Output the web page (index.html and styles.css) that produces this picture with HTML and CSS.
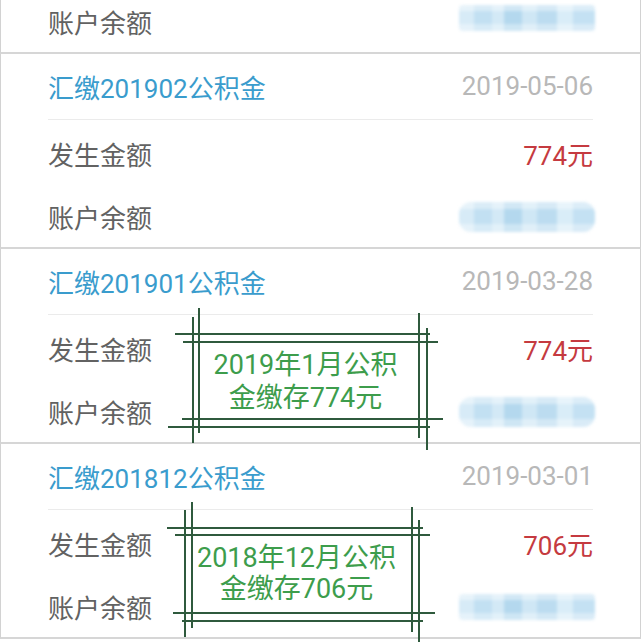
FILE: index.html
```html
<!DOCTYPE html>
<html lang="zh-CN">
<head>
<meta charset="utf-8">
<title>公积金明细</title>
<link rel="stylesheet" href="styles.css">
</head>
<body>
<div class="screen">
  <div class="list">
    <section class="card">
      <div class="row"><span class="label">账户余额</span><span class="masked m1"></span></div>
    </section>
    <section class="card">
      <div class="head"><span class="title">汇缴201902公积金</span><span class="date">2019-05-06</span></div>
      <div class="row"><span class="label">发生金额</span><span class="amount">774元</span></div>
      <div class="row"><span class="label">账户余额</span><span class="masked m2"></span></div>
    </section>
    <section class="card">
      <div class="head"><span class="title">汇缴201901公积金</span><span class="date">2019-03-28</span></div>
      <div class="row"><span class="label">发生金额</span><span class="amount">774元</span></div>
      <div class="row"><span class="label">账户余额</span><span class="masked m3"></span></div>
    </section>
    <section class="card">
      <div class="head"><span class="title">汇缴201812公积金</span><span class="date">2019-03-01</span></div>
      <div class="row"><span class="label">发生金额</span><span class="amount">706元</span></div>
      <div class="row"><span class="label">账户余额</span><span class="masked m4"></span></div>
    </section>
  </div>

  <div class="stamp s1">
    <i class="ln h a"></i><i class="ln h b"></i><i class="ln h c"></i><i class="ln h d"></i>
    <i class="ln v a"></i><i class="ln v b"></i><i class="ln v c"></i><i class="ln v d"></i>
    <div class="txt">2019年1月公积<br>金缴存774元</div>
  </div>
  <div class="stamp s2">
    <i class="ln h a"></i><i class="ln h b"></i><i class="ln h c"></i><i class="ln h d"></i>
    <i class="ln v a"></i><i class="ln v b"></i><i class="ln v c"></i><i class="ln v d"></i>
    <div class="txt">2018年12月公积<br>金缴存706元</div>
  </div>
</div>
</body>
</html>
```

FILE: styles.css
```css
* { box-sizing: border-box; }
html, body { margin: 0; padding: 0; background: #fff; }
body {
  font-family: Roboto, "Noto Sans CJK SC", sans-serif;
  width: 641px;
  height: 642px;
  overflow: hidden;
}
.screen {
  position: relative;
  width: 641px;
  height: 642px;
  overflow: hidden;
  background: #fff;
}
.list {
  margin-top: -12px;
  display: flex;
  flex-direction: column;
}
.card {
  border-left: 1px solid #d2d2d2;
  border-right: 1px solid #d2d2d2;
  border-bottom: 2px solid #d6d6d6;
  padding: 0 47px;
  display: flex;
  flex-direction: column;
}
.head {
  height: 66px;
  border-bottom: 1px solid #ebebeb;
  display: flex;
  align-items: center;
  justify-content: space-between;
}
.row {
  height: 63.5px;
  padding-top: 4px;
  display: flex;
  align-items: center;
  justify-content: space-between;
}
.title { font-size: 26px; color: #3a9ccd; }
.date { font-size: 26px; color: #b8b8b8; }
.label { font-size: 26px; color: #626262; }
.amount { font-size: 26px; color: #c53a40; }

.masked {
  display: block;
  width: 136px;
  height: 26px;
  margin-right: -2px;
  border-radius: 4px;
  filter: blur(1.5px);
  background:
    linear-gradient(180deg, rgba(255,255,255,0.4) 0 25%, rgba(255,255,255,0) 25% 75%, rgba(255,255,255,0.35) 75%),
    linear-gradient(90deg, #d7ebf7 0 11%, #c2e0f2 11% 24%, #d3e9f6 24% 33%, #b4d8ee 33% 46%, #cfe7f5 46% 57%, #bcdcf0 57% 72%, #d9edf8 72% 84%, #c4e1f3 84%);
}
.m1 { margin-top: -8px; }
.m2 { height: 30px; border-radius: 12px; }
.m3 { height: 30px; border-radius: 12px; }
.m4 { height: 26px; }

.stamp {
  position: absolute;
  color: #3d9d4c;
  font-size: 27px;
}
.stamp .ln {
  position: absolute;
  display: block;
  background: #2f5a3d;
}
.stamp .h { height: 2px; }
.stamp .v { width: 2px; }
.stamp .txt {
  position: absolute;
  left: 0;
  right: 0;
  text-align: center;
  white-space: nowrap;
}

.s1 { left: 168px; top: 308px; width: 275px; height: 142px; }
.s1 .h.a { top: 25px; left: 7px; width: 255px; }
.s1 .h.b { top: 33px; left: 15px; width: 255px; }
.s1 .h.c { top: 110px; left: 14px; width: 261px; }
.s1 .h.d { top: 118px; left: 0; width: 262px; }
.s1 .v.a { left: 24px; top: 9px; height: 126px; }
.s1 .v.b { left: 30px; top: 0; height: 125px; }
.s1 .v.c { left: 250px; top: 5px; height: 125px; }
.s1 .v.d { left: 258px; top: 20px; height: 122px; }
.s1 .txt { top: 41px; line-height: 33px; }

.s2 { left: 167px; top: 502px; width: 268px; height: 140px; }
.s2 .h.a { top: 25px; left: 0; width: 256px; }
.s2 .h.b { top: 32px; left: 8px; width: 255px; }
.s2 .h.c { top: 110px; left: 6px; width: 262px; }
.s2 .h.d { top: 118px; left: 15px; width: 241px; }
.s2 .v.a { left: 17px; top: 8px; height: 127px; }
.s2 .v.b { left: 24px; top: 0; height: 126px; }
.s2 .v.c { left: 244px; top: 5px; height: 125px; }
.s2 .v.d { left: 251px; top: 18px; height: 122px; }
.s2 .txt { top: 41px; right: 9px; line-height: 31px; }
```
